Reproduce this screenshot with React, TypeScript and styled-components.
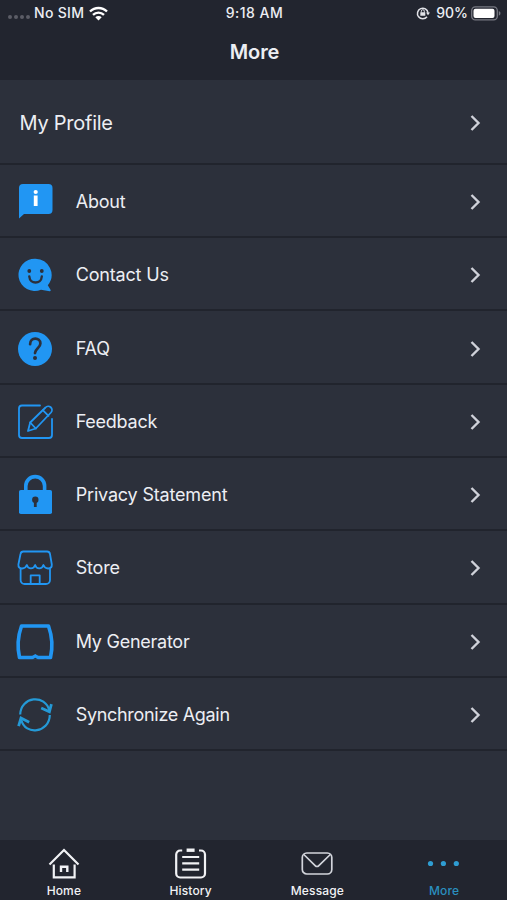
import React from "react";
import styled, { createGlobalStyle } from "styled-components";

const BLUE = "#2196f3";
const SKY = "#2499d6";
const ACTIVE = "#2a8fbf";
const BODY = "#2c303b";
const BAR = "#22252f";

const GlobalStyle = createGlobalStyle`
  * { box-sizing: border-box; }
  body { margin: 0; background: ${BODY}; font-family: Inter, "Liberation Sans", sans-serif; }
`;

const Screen = styled.div`
  width: 507px;
  height: 900px;
  display: flex;
  flex-direction: column;
  overflow: hidden;
  background: ${BODY};
  color: #eceef3;
`;

const Header = styled.header`
  height: 80px;
  flex: none;
  background: ${BAR};
`;

const StatusBar = styled.div`
  height: 26px;
  display: grid;
  grid-template-columns: 1fr auto 1fr;
  align-items: center;
  padding: 0 6px 0 8px;
  font-size: 14px;
  font-weight: 500;
  line-height: 26px;
`;

const StatusGroup = styled.div<{ $end?: boolean }>`
  display: flex;
  align-items: center;
  justify-content: ${(p) => (p.$end ? "flex-end" : "flex-start")};
`;

const StatusText = styled.span<{ $spacing?: number }>`
  letter-spacing: ${(p) => p.$spacing ?? 0}px;
`;

const BatteryLevel = styled(StatusText)`
  margin: 0 3px 0 6px;
`;

const Signal = styled.div`
  display: flex;
  gap: 2px;
  margin: 8px 4px 0 0;
`;

const SignalDot = styled.i`
  width: 4px;
  height: 4px;
  border-radius: 50%;
  background: #5b5d66;
`;

const StatusIcon = styled.svg<{ $gap?: number }>`
  display: block;
  flex: none;
  margin-left: ${(p) => p.$gap ?? 0}px;
`;

const Title = styled.h1`
  margin: 0;
  height: 52px;
  font-size: 20px;
  font-weight: 600;
  line-height: 53px;
  letter-spacing: -0.1px;
  text-align: center;
  padding-left: 2px;
`;

const List = styled.main`
  flex: 1;
`;

const Row = styled.div<{ $tall?: boolean }>`
  height: ${(p) => (p.$tall ? 84.8 : 73.3)}px;
  display: flex;
  align-items: center;
  padding: ${(p) => (p.$tall ? "3px 24px 0 19.5px" : "3px 24px 0 12.7px")};
  border-bottom: 2px solid #21242d;
`;

const RowIcon = styled.svg`
  width: 44px;
  height: 44px;
  flex: none;
  margin-right: 19px;
`;

const Label = styled.span<{ $size: number; $spacing: number }>`
  flex: 1;
  font-size: ${(p) => p.$size}px;
  letter-spacing: ${(p) => p.$spacing}px;
  line-height: 26px;
`;

const TabBar = styled.nav`
  height: 60px;
  flex: none;
  display: grid;
  grid-template-columns: repeat(4, 1fr);
  background: ${BAR};
`;

const Tab = styled.div<{ $active?: boolean }>`
  display: flex;
  flex-direction: column;
  align-items: center;
  padding: 5px 0 0 1px;
  color: ${(p) => (p.$active ? ACTIVE : "#f1f2f5")};
`;

const TabIcon = styled.svg`
  width: 36px;
  height: 36px;
`;

const TabLabel = styled.span`
  font-size: 12px;
  font-weight: 500;
  letter-spacing: 0.15px;
  line-height: 20px;
`;

const Chevron = () => (
  <svg width="14" height="20" viewBox="0 0 14 20" fill="none">
    <path d="M2.500 3 9.500 10 2.500 17" stroke="#cfd1d9" strokeWidth="2.400" />
  </svg>
);

const stroke = { fill: "none", stroke: BLUE, strokeWidth: 1.8, strokeLinecap: "round", strokeLinejoin: "round" } as const;

const AboutIcon = (
  <>
    <path d="M10 4h25.500a4 4 0 0 1 4 4v22a4 4 0 0 1-4 4H11l-5 4.500V8a4 4 0 0 1 4-4Z" fill={BLUE} />
    <circle cx="22.700" cy="12" r="2.100" fill="#fff" />
    <path d="M20.800 15.500h3.800v10.500h-3.800Z" fill="#fff" />
  </>
);

const ContactIcon = (
  <>
    <path d="M22.500 5.700a16.200 16.200 0 0 1 12.300 26.500l2.700 4.600c.5.900.1 1.600-.9 1.500l-8.600-1.500A16.200 16.200 0 1 1 22.500 5.700Z" fill={BLUE} />
    <circle cx="16.300" cy="18" r="1.900" fill={BODY} />
    <circle cx="28.800" cy="18" r="1.900" fill={BODY} />
    <path d="M16.300 23.500c.6 8 11.900 8 12.500 0" fill="none" stroke={BODY} strokeWidth="2.400" strokeLinecap="round" />
  </>
);

const FaqIcon = (
  <>
    <circle cx="22" cy="22" r="17" fill={BLUE} />
    <path d="M17.100 17.200c0-7.500 10.300-7.200 10.300-.8 0 4.600-5.400 4.900-5.400 9.700" fill="none" stroke={BODY} strokeWidth="2.700" strokeLinecap="round" />
    <circle cx="22" cy="31" r="2" fill={BODY} />
  </>
);

const FeedbackIcon = (
  <g {...stroke}>
    <path d="M27 5.500H9a3 3 0 0 0-3 3v26.500a3 3 0 0 0 3 3h27a3 3 0 0 0 3-3V19" />
    <path d="m15 31 2.200-8.500L32.500 7.500a3.600 3.600 0 0 1 5.500 5L22.800 28.500Z" />
    <path d="m17.200 22.500 5.600 6M29.800 10.200l5.700 5.600" />
  </g>
);

const PrivacyIcon = (
  <>
    <path d="M12.800 18v-5a9.400 9.400 0 0 1 18.800 0v5" fill="none" stroke={BLUE} strokeWidth="3.600" />
    <rect x="6" y="17" width="33" height="24" rx="1.800" fill={BLUE} />
    <circle cx="22.300" cy="26.700" r="3.200" fill={BODY} />
    <path d="M20.900 27h2.800v7h-2.800Z" fill={BODY} />
  </>
);

const StoreIcon = (
  <g {...stroke}>
    <path d="M10.500 5.500h23.500a3 3 0 0 1 3 2.500l1.800 10.500c.3 5-6.500 5.500-8.400.5-1.300 4.600-7 4.600-8.300 0-1.300 4.600-7 4.600-8.300 0-1.900 5-8.700 4.500-8.400-.5L7.500 8a3 3 0 0 1 3-2.500Z" />
    <path d="M7.600 23v11a4 4 0 0 0 4 4h21.400a4 4 0 0 0 4-4V23M17.700 38v-8.700h9V38" />
  </g>
);

const GeneratorIcon = (
  <>
    <path
      d="M8.500 6h27c3.200 9 4.400 21 2 31.500h-31C4.100 27 5.300 15 8.500 6Z"
      fill="none" stroke={BLUE} strokeWidth="3.600" strokeLinejoin="round"
    />
    <path d="m18.300 36.500 4-2.500 4 2.500Z" fill={BLUE} />
    <path d="m19.500 39.600 2.800-1.900 2.800 1.900Z" fill={BODY} />
  </>
);

const SyncIcon = (
  <g fill="none" stroke={SKY} strokeWidth="2.200">
    <path d="M7.200 21.500C7.600 3.500 32.500 .5 36.500 18M36.800 22C36.600 39.500 12 43.500 8.200 26.500" />
    <path d="m28.200 15 8.200 3.800 2-7.600M16.200 29.200l-8.200-4.200-2.400 8.200" strokeWidth="2.800" />
  </g>
);

const entries = [
  { label: "About", icon: AboutIcon, spacing: -0.2 },
  { label: "Contact Us", icon: ContactIcon, spacing: -0.17 },
  { label: "FAQ", icon: FaqIcon, spacing: -0.1 },
  { label: "Feedback", icon: FeedbackIcon, spacing: -0.25 },
  { label: "Privacy Statement", icon: PrivacyIcon, spacing: -0.18 },
  { label: "Store", icon: StoreIcon, spacing: -0.2 },
  { label: "My Generator", icon: GeneratorIcon, spacing: -0.25 },
  { label: "Synchronize Again", icon: SyncIcon, spacing: -0.31 },
];

const tabs = [
  {
    label: "Home",
    icon: (
      <g fill="none" stroke="currentColor" strokeWidth="2.200">
        <path d="M3.500 19.500 18 5l14.500 14.500M7.800 19.500V32.400h20.800V19.500" />
        <path d="M15 27v-5.300h6.300V27" strokeWidth="2.400" />
      </g>
    ),
  },
  {
    label: "History",
    icon: (
      <g fill="none" stroke="currentColor" strokeWidth="2.200">
        <path d="M9.200 5.500H7.200A4 4 0 0 0 3.200 9.500v19a4 4 0 0 0 4 4h20.800a4 4 0 0 0 4-4v-19a4 4 0 0 0-4-4h-2" />
        <path d="M13.600 5.200h8" strokeWidth="3.400" />
        <path d="M9.200 12h17M9.200 18.300h17M9.200 24.600h17" />
      </g>
    ),
  },
  {
    label: "Message",
    icon: (
      <g fill="none" stroke="#d3d5dc" strokeWidth="1.700">
        <rect x="3.300" y="8" width="29.500" height="21" rx="4.500" />
        <path d="m4.800 9.500 11.600 11.300a2.200 2.200 0 0 0 3.200 0L31.300 9.500" />
      </g>
    ),
  },
  {
    label: "More",
    active: true,
    icon: (
      <g fill="#2f9dd2">
        <circle cx="4.500" cy="18.500" r="2.600" />
        <circle cx="17.400" cy="18.500" r="2.600" />
        <circle cx="30.300" cy="18.500" r="2.600" />
      </g>
    ),
  },
];

export default function App() {
  return (
    <Screen>
      <GlobalStyle />
      <Header>
        <StatusBar>
          <StatusGroup>
            <Signal>
              {[0, 1, 2, 3].map((n) => <SignalDot key={n} />)}
            </Signal>
            <StatusText $spacing={0.3}>No SIM</StatusText>
            <StatusIcon $gap={5} width="19" height="15" viewBox="0 0 19 15">
              <g fill="none" stroke="#fff" strokeWidth="2.400">
                <path d="M1 5.500c4.800-4.700 12.200-4.700 17 0M4 8.900c3.200-3.100 7.800-3.100 11 0" />
              </g>
              <path d="M6.300 11.200c1.900-1.700 4.500-1.700 6.400 0L9.500 14.500Z" fill="#fff" />
            </StatusIcon>
          </StatusGroup>
          <StatusText $spacing={0.5}>9:18 AM</StatusText>
          <StatusGroup $end>
            <StatusIcon width="14" height="14" viewBox="0 0 14 14">
              <path d="M11 10.700A5.300 5.300 0 1 1 12 6.800" fill="none" stroke="#e2e3e8" strokeWidth="1.500" />
              <path d="M10 6.500h4l-2 2.700Z" fill="#e2e3e8" />
              <rect x="4.300" y="6.300" width="5" height="3.500" rx=".4" fill="#e2e3e8" />
              <path d="M5.300 6.600V5.200a1.500 1.500 0 0 1 3 0v1.400" fill="none" stroke="#e2e3e8" />
            </StatusIcon>
            <BatteryLevel>90%</BatteryLevel>
            <StatusIcon width="30" height="15" viewBox="0 0 30 15">
              <rect x=".7" y=".9" width="25.600" height="13" rx="3.600" fill="none" stroke="#777982" strokeWidth="1.300" />
              <rect x="2.500" y="2.700" width="21" height="9.400" rx="2" fill="#fff" />
              <path d="M27.800 5.100c2.200.8 2.200 3.800 0 4.600Z" fill="#777982" />
            </StatusIcon>
          </StatusGroup>
        </StatusBar>
        <Title>More</Title>
      </Header>
      <List>
        <Row $tall>
          <Label $size={20} $spacing={-0.25}>My Profile</Label>
          <Chevron />
        </Row>
        {entries.map((entry) => (
          <Row key={entry.label}>
            <RowIcon viewBox="0 0 44 44">{entry.icon}</RowIcon>
            <Label $size={18} $spacing={entry.spacing}>{entry.label}</Label>
            <Chevron />
          </Row>
        ))}
      </List>
      <TabBar>
        {tabs.map((tab) => (
          <Tab key={tab.label} $active={tab.active}>
            <TabIcon viewBox="0 0 36 36">{tab.icon}</TabIcon>
            <TabLabel>{tab.label}</TabLabel>
          </Tab>
        ))}
      </TabBar>
    </Screen>
  );
}
